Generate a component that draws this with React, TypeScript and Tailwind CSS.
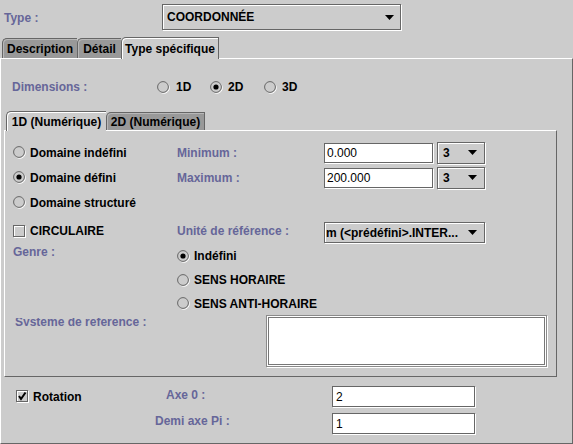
import React from "react";

const LBL = "text-[#666699]";

function RadioIcon({ checked }: { checked?: boolean }) {
  return (
    <svg width="13" height="13" viewBox="0 0 13 13" className="shrink-0">
      <circle cx="6.9" cy="6.9" r="5.4" fill="none" stroke="#ffffff" strokeWidth="1" />
      <circle cx="6" cy="6" r="5.4" fill="#cccccc" stroke="#666666" strokeWidth="1" />
      {checked && <circle cx="6" cy="6" r="2.6" fill="#000000" />}
    </svg>
  );
}

function CheckIcon({ checked }: { checked?: boolean }) {
  return (
    <svg width="13" height="13" viewBox="0 0 13 13" className="shrink-0" shapeRendering="crispEdges">
      <rect x="1.5" y="1.5" width="11" height="11" fill="none" stroke="#ffffff" />
      <rect x="0.5" y="0.5" width="11" height="11" fill="none" stroke="#666666" />
      {checked && (
        <path d="M3 6 L5 9 L9.5 2.5" fill="none" stroke="#000" strokeWidth="2" shapeRendering="auto" />
      )}
    </svg>
  );
}

function Arrow() {
  return (
    <svg width="9" height="5" viewBox="0 0 9 5" className="shrink-0">
      <polygon points="0,0 9,0 4.5,5" fill="#000" />
    </svg>
  );
}

function Radio({ checked, label, gap = "gap-[4px]" }: { checked?: boolean; label: string; gap?: string }) {
  return (
    <div className={`flex items-center ${gap}`}>
      <RadioIcon checked={checked} />
      <span className="text-black whitespace-nowrap">{label}</span>
    </div>
  );
}

function Combo({ text, className, pl, pr }: { text: string; className: string; pl: string; pr: string }) {
  return (
    <div
      className={`flex items-center justify-between border border-[#666666] bg-[#cccccc] shadow-[1px_1px_0_#ffffff,inset_1px_1px_0_#ffffff] ${pl} ${pr} ${className}`}
    >
      <span className="text-black whitespace-nowrap">{text}</span>
      <Arrow />
    </div>
  );
}

function Field({ text, className, pl }: { text: string; className: string; pl: string }) {
  return (
    <div
      className={`flex items-center bg-white border border-[#666666] shadow-[1px_1px_0_#ffffff] font-normal text-black ${pl} ${className}`}
    >
      {text}
    </div>
  );
}

function Tab({
  label,
  selected,
  w,
  last,
  h,
}: {
  label: string;
  selected?: boolean;
  w: string;
  last?: boolean;
  h: string;
}) {
  return (
    <div
      className={`flex items-center justify-center whitespace-nowrap text-black border-l border-t border-[#666666] rounded-tl-[5px] ${w} ${h} ${
        last ? "border-r" : ""
      } ${
        selected
          ? "bg-[#cccccc] shadow-[inset_1px_1px_0_#ffffff] mb-[-1px]"
          : "bg-[#999999] shadow-[inset_1px_1px_0_#b8b8b8]"
      }`}
    >
      {label}
    </div>
  );
}

export default function App() {
  return (
    <div
      className="w-[573px] h-[444px] flex flex-col bg-[#cccccc] overflow-hidden font-bold text-[12px] leading-[16px]"
      style={{ fontFamily: '"Liberation Sans", Arial, sans-serif' }}
    >
      {/* Type row */}
      <div className="flex items-center pt-[4px]">
        <div className={`w-[162px] pl-[4px] pt-[2px] ${LBL}`}>Type :</div>
        <Combo text="COORDONNÉE" className="w-[239px] h-[26px]" pl="pl-[4px]" pr="pr-[6px]" />
      </div>

      {/* Main tabs */}
      <div className="flex items-end h-[21px] mt-[7px] pl-[2px] relative z-10">
        <Tab label="Description" w="w-[75px]" h="h-[20px]" />
        <Tab label="Détail" w="w-[44px]" h="h-[20px]" />
        <Tab label="Type spécifique" w="w-[98px]" h="h-[22px]" selected last />
      </div>

      {/* Main panel */}
      <div className="flex-1 flex flex-col border-t border-l border-white border-r border-b border-r-[#666666] border-b-[#666666]">
        {/* Dimensions */}
        <div className="flex items-center h-[16px] mt-[20px]">
          <div className={`w-[156px] pl-[11px] ${LBL}`}>Dimensions :</div>
          <div className="w-[53px]">
            <Radio label="1D" gap="gap-[6px]" />
          </div>
          <div className="w-[54px]">
            <Radio label="2D" gap="gap-[5px]" checked />
          </div>
          <div>
            <Radio label="3D" gap="gap-[5px]" />
          </div>
        </div>

        {/* Inner tabs */}
        <div className="ml-[3px] w-[553px] flex flex-col mt-[16px]">
          <div className="flex items-end h-[19px] pl-[2px] relative z-10">
            <Tab label="1D (Numérique)" w="w-[100px]" h="h-[20px]" selected />
            <Tab label="2D (Numérique)" w="w-[99px]" h="h-[18px]" last />
          </div>

          {/* Inner panel */}
          <div className="h-[247px] flex flex-col border-t border-l border-white border-r border-b border-r-[#666666] border-b-[#666666] pt-[9px]">
            {/* Row A */}
            <div className="flex items-center h-[25px]">
              <div className="w-[172px] pl-[8px]">
                <Radio label="Domaine indéfini" />
              </div>
              <div className={`w-[147px] ${LBL}`}>Minimum :</div>
              <Field text="0.000" className="w-[109px] h-[20px]" pl="pl-[2px]" />
              <Combo text="3" className="ml-[4px] w-[48px] h-[22px]" pl="pl-[5px]" pr="pr-[7px]" />
            </div>
            {/* Row B */}
            <div className="flex items-center h-[25px]">
              <div className="w-[172px] pl-[8px]">
                <Radio label="Domaine défini" checked />
              </div>
              <div className={`w-[147px] ${LBL}`}>Maximum :</div>
              <Field text="200.000" className="w-[109px] h-[20px]" pl="pl-[2px]" />
              <Combo text="3" className="ml-[4px] w-[48px] h-[22px]" pl="pl-[5px]" pr="pr-[7px]" />
            </div>
            {/* Row C */}
            <div className="flex items-center h-[25px]">
              <div className="w-[172px] pl-[8px]">
                <Radio label="Domaine structuré" />
              </div>
            </div>
            {/* Row D */}
            <div className="flex items-center h-[26px] mt-[3px]">
              <div className="w-[172px] pl-[8px] flex items-center gap-[4px]">
                <CheckIcon />
                <span className="text-black">CIRCULAIRE</span>
              </div>
              <div className={`w-[147px] whitespace-nowrap ${LBL}`}>Unité de référence :</div>
              <Combo
                text="m (<prédéfini>.INTER..."
                className="w-[161px] h-[21px] self-end mb-[1px]"
                pl="pl-[1px]"
                pr="pr-[7px]"
              />
            </div>
            {/* Row E */}
            <div className="flex items-center h-[24px]">
              <div className={`w-[172px] pl-[8px] self-start h-[16px] ${LBL}`}>Genre :</div>
              <Radio label="Indéfini" checked />
            </div>
            {/* Row F */}
            <div className="flex items-center h-[24px]">
              <div className="w-[172px]" />
              <Radio label="SENS HORAIRE" />
            </div>
            {/* Row G */}
            <div className="flex items-center h-[23px]">
              <div className="w-[172px]" />
              <Radio label="SENS ANTI-HORAIRE" />
            </div>
            {/* Row H */}
            <div className="flex">
              <div className="w-[261px] pl-[10px] pt-[3px]">
                <div className={`h-[8px] overflow-hidden ${LBL}`}>
                  <div className="leading-[12px] mt-[-2px] whitespace-nowrap">Systeme de reference :</div>
                </div>
              </div>
              <div className="w-[281px] h-[52px] bg-white border border-[#8a8a8a] shadow-[1px_1px_0_#ffffff,inset_0_0_0_1px_#ffffff,inset_0_0_0_2px_#777777]" />
            </div>
          </div>
        </div>

        {/* Bottom rows */}
        <div className="flex items-center h-[21px] mt-[9px]">
          <div className="w-[165px] pl-[15px] flex items-center gap-[4px]">
            <CheckIcon checked />
            <span className="text-black">Rotation</span>
          </div>
          <div className={`w-[166px] mb-[4px] ${LBL}`}>Axe 0 :</div>
          <Field text="2" className="w-[143px] h-[21px]" pl="pl-[3px]" />
        </div>
        <div className="flex items-center h-[21px] mt-[6px]">
          <div className="w-[154px]" />
          <div className={`w-[177px] mb-[6px] ${LBL}`}>Demi axe Pi :</div>
          <Field text="1" className="w-[143px] h-[21px]" pl="pl-[3px]" />
        </div>
      </div>
    </div>
  );
}
